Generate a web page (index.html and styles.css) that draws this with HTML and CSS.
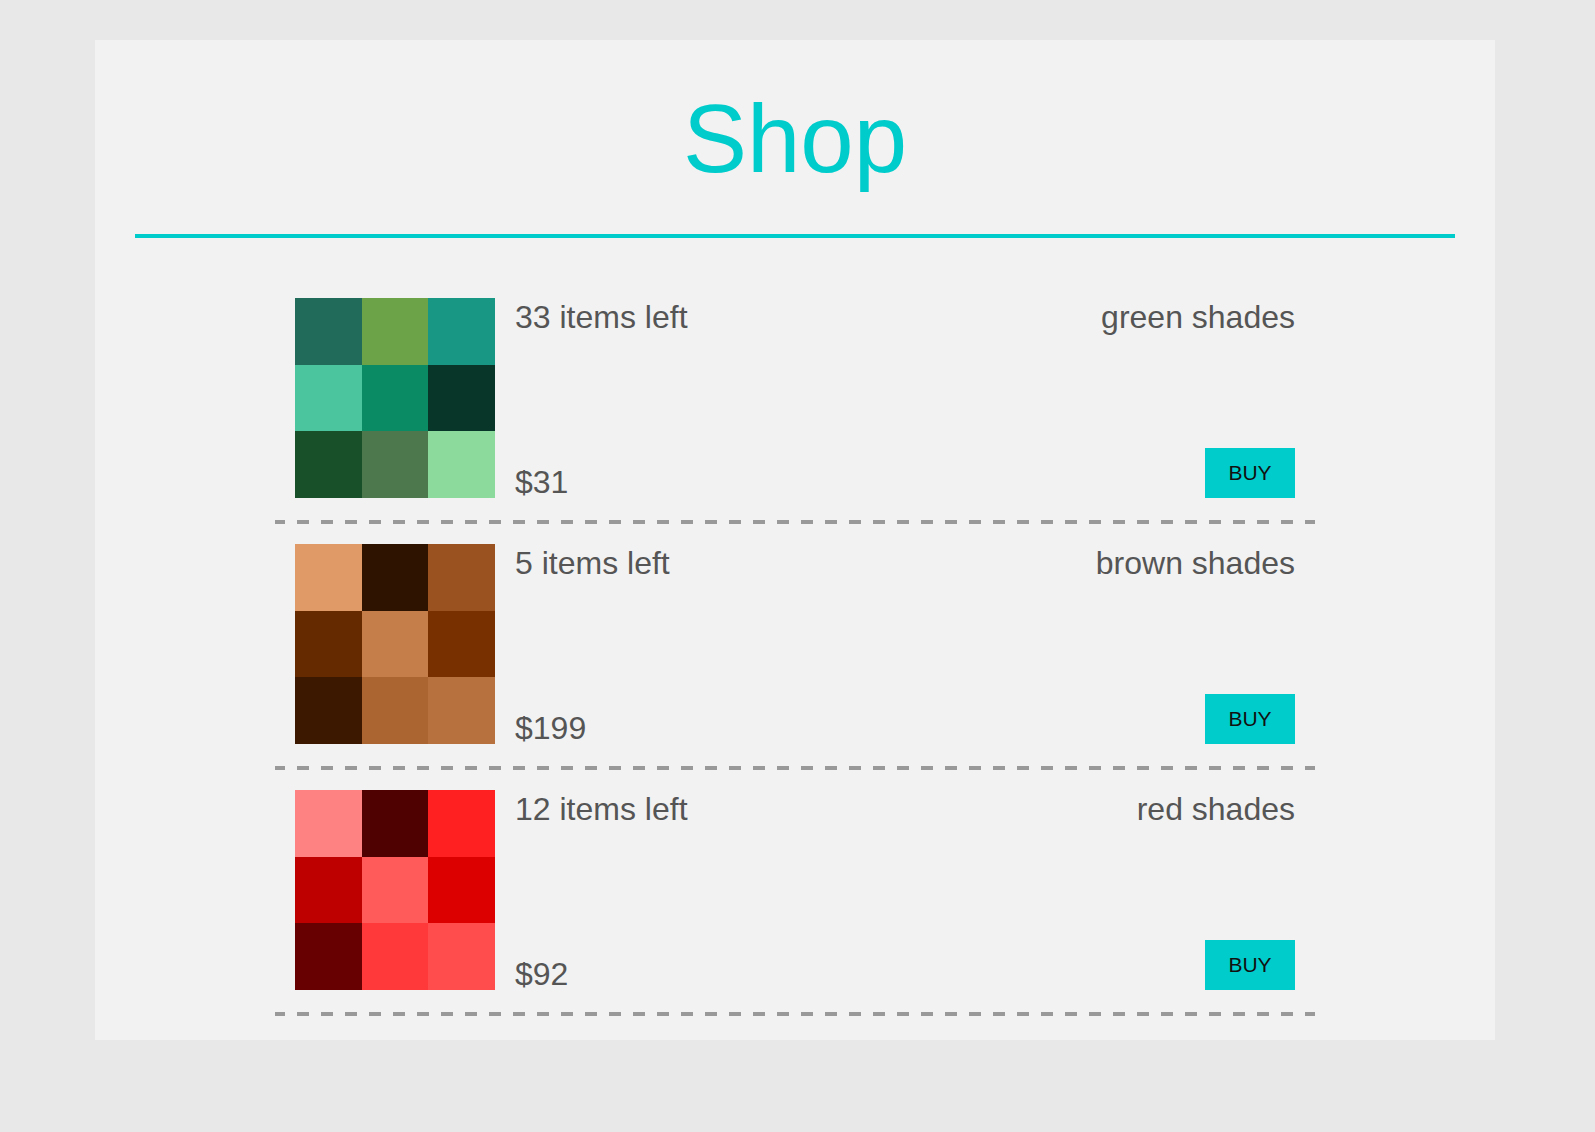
FILE: index.html
```html
<!DOCTYPE html>
<html lang="en">
<head>
<meta charset="utf-8">
<title>Shop</title>
<link rel="stylesheet" href="styles.css">
</head>
<body>
<div class="panel">
  <h1 class="title">Shop</h1>
  <div class="list">
    <div class="item">
      <div class="swatch">
        <span style="background:#216b5b"></span><span style="background:#6ca349"></span><span style="background:#189784"></span>
        <span style="background:#4ac59e"></span><span style="background:#0a8b64"></span><span style="background:#083628"></span>
        <span style="background:#18502a"></span><span style="background:#4d784e"></span><span style="background:#8cdb9d"></span>
      </div>
      <div class="info">
        <div class="stock">33 items left</div>
        <div class="price">$31</div>
      </div>
      <div class="side">
        <div class="name">green shades</div>
        <button class="buy">BUY</button>
      </div>
    </div>
    <div class="item">
      <div class="swatch">
        <span style="background:#e09a67"></span><span style="background:#2e1300"></span><span style="background:#9a5220"></span>
        <span style="background:#662a00"></span><span style="background:#c57e4a"></span><span style="background:#793000"></span>
        <span style="background:#3c1800"></span><span style="background:#ab6531"></span><span style="background:#b7713e"></span>
      </div>
      <div class="info">
        <div class="stock">5 items left</div>
        <div class="price">$199</div>
      </div>
      <div class="side">
        <div class="name">brown shades</div>
        <button class="buy">BUY</button>
      </div>
    </div>
    <div class="item">
      <div class="swatch">
        <span style="background:#ff8282"></span><span style="background:#4f0000"></span><span style="background:#ff2121"></span>
        <span style="background:#bf0000"></span><span style="background:#ff5b5b"></span><span style="background:#dc0000"></span>
        <span style="background:#670000"></span><span style="background:#ff3939"></span><span style="background:#ff4d4d"></span>
      </div>
      <div class="info">
        <div class="stock">12 items left</div>
        <div class="price">$92</div>
      </div>
      <div class="side">
        <div class="name">red shades</div>
        <button class="buy">BUY</button>
      </div>
    </div>
  </div>
</div>
</body>
</html>
```
FILE: styles.css
```css
html {
  background: #e8e8e8;
}
body {
  margin: 0;
  padding: 40px 100px 0 95px;
  font-family: "Liberation Sans", Arial, Helvetica, sans-serif;
  color: #555555;
}
.panel {
  background: #f2f2f2;
  padding: 44px 40px 24px;
}
.title {
  margin: 0;
  padding-bottom: 40px;
  border-bottom: 4px solid #00cccc;
  color: #00cccc;
  font-size: 96px;
  line-height: 110px;
  font-weight: normal;
  text-align: center;
}
.list {
  width: 1040px;
  margin: 40px auto 0;
}
.item {
  display: flex;
  padding: 20px 20px 26px;
  background: linear-gradient(to right, #999999 12px, transparent 12px) -2px 100% / 24px 4px repeat-x;
}
.swatch {
  width: 200px;
  height: 200px;
  display: grid;
  grid-template-columns: repeat(3, 1fr);
  grid-template-rows: repeat(3, 1fr);
  flex: none;
}
.info {
  flex: 1;
  margin-left: 20px;
  display: flex;
  flex-direction: column;
  justify-content: space-between;
  font-size: 32px;
}
.stock, .name {
  line-height: 38px;
}
.price {
  line-height: 32px;
}
.side {
  display: flex;
  flex-direction: column;
  justify-content: space-between;
  align-items: flex-end;
  font-size: 32px;
}
.buy {
  width: 90px;
  height: 50px;
  border: none;
  margin: 0;
  padding: 0;
  background: #00cccc;
  color: #111111;
  font-family: "Liberation Sans", Arial, Helvetica, sans-serif;
  font-size: 21px;
}
```
